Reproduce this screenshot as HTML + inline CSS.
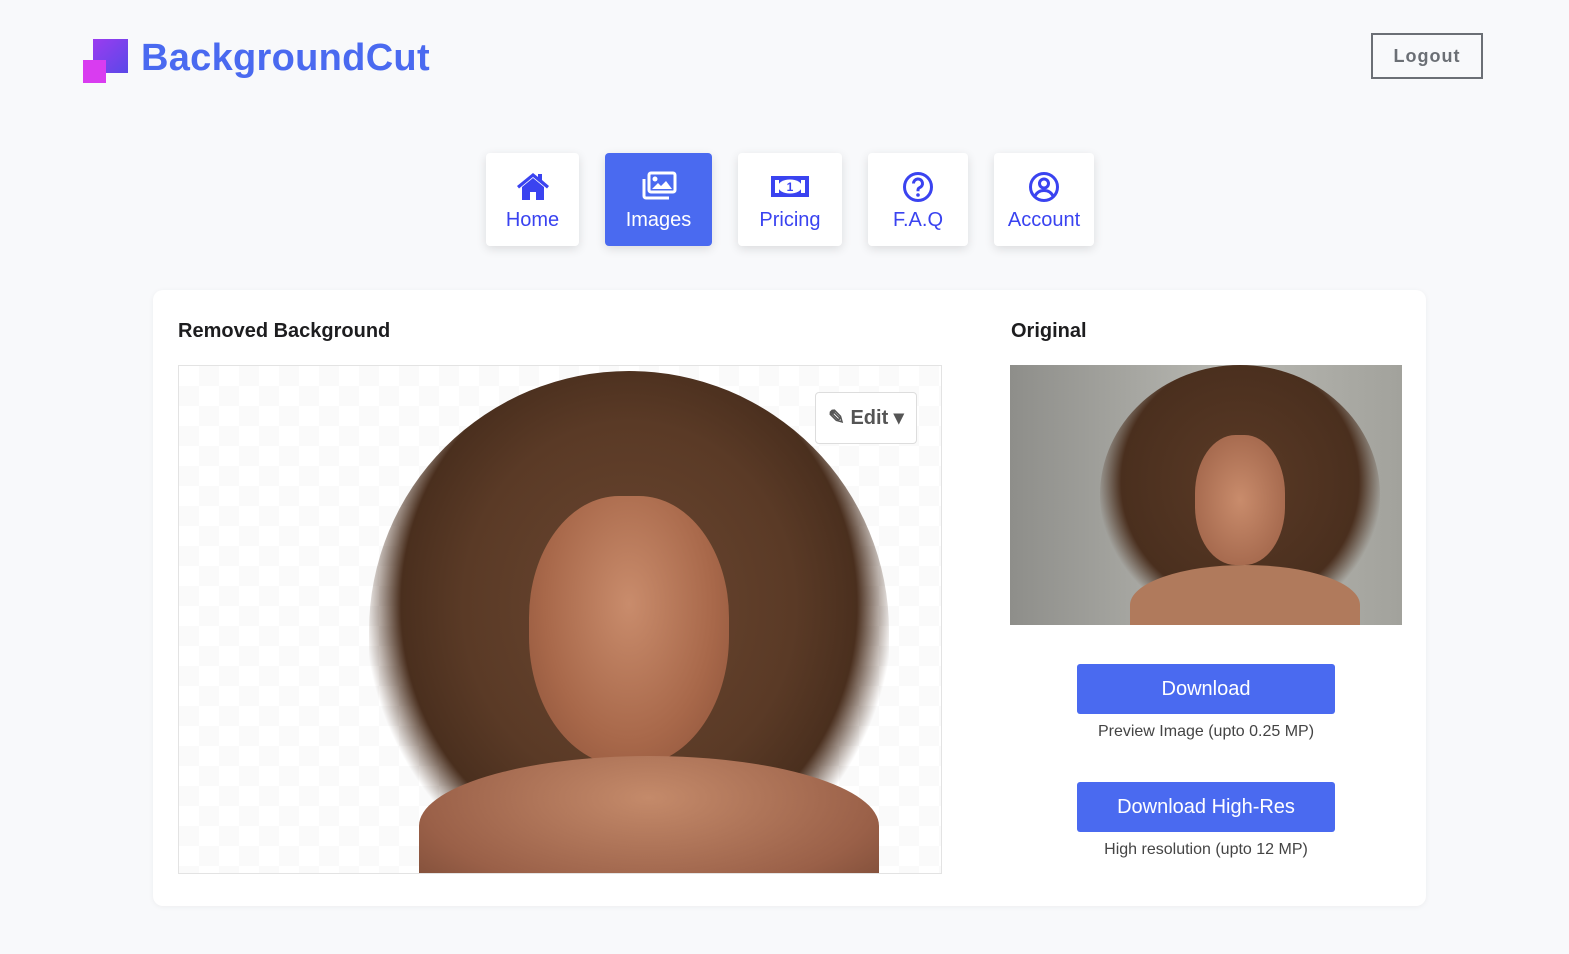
<!DOCTYPE html>
<html><head><style>
body{margin:0;background:#f8f9fb;font-family:"Liberation Sans",sans-serif;width:1569px;height:954px;position:relative;overflow:hidden}
.abs{position:absolute}
.logo{left:141px;top:37px;font-size:38px;font-weight:bold;color:#4a6af0;letter-spacing:0.3px}
.logout{left:1371px;top:33px;width:108px;height:42px;border:2px solid #6b6f75;color:#6b6f75;font-weight:bold;font-size:18px;text-align:center;line-height:42px;letter-spacing:1px}
.nav{top:153px;height:93px;background:#fff;border-radius:4px;box-shadow:0 3px 10px rgba(0,0,0,.12);color:#3a43f0;font-size:20px;text-align:center}
.nav svg{position:absolute;left:50%;top:18px;transform:translateX(-50%)}
.nav span{position:absolute;left:0;right:0;top:56px}
.card{left:153px;top:290px;width:1273px;height:616px;background:#fff;border-radius:10px;box-shadow:0 1px 6px rgba(0,0,0,.05)}
h3{margin:0;font-size:20px;font-weight:bold;color:#1d1d1f}
.btn{left:1077px;width:258px;height:50px;background:#4a6af0;color:#fff;font-size:20px;text-align:center;line-height:50px;border-radius:3px}
.cap{left:1040px;width:332px;text-align:center;font-size:16px;color:#444}
</style></head><body>
<svg class="abs" style="left:83px;top:39px" width="46" height="45"><defs><linearGradient id="g1" x1="0" y1="0" x2="1" y2="1"><stop offset="0" stop-color="#9b3cf0"/><stop offset="1" stop-color="#5a48e8"/></linearGradient></defs><rect x="10" y="0" width="35" height="34" fill="url(#g1)"/><rect x="0" y="21" width="23" height="23" fill="#d93cf0"/></svg>
<div class="abs logo">BackgroundCut</div>
<div class="abs logout">Logout</div>

<div class="abs nav" style="left:486px;width:93px"><svg width="36" height="30" viewBox="0 0 36 30"><path d="M18 2L2 15l2 2.5L18 6l14 11.5L34 15 27 9V3h-4v3z" fill="#3a43f0"/><path d="M7 16L18 7l11 9v13h-8v-8h-6v8H7z" fill="#3a43f0"/></svg><span>Home</span></div>
<div class="abs nav" style="left:605px;width:107px;background:#4a6af0;color:#fff"><svg width="36" height="30" viewBox="0 0 36 30"><rect x="8" y="2" width="26" height="19" rx="2" fill="none" stroke="#fff" stroke-width="3"/><path d="M3 8v17a2 2 0 0 0 2 2h23" fill="none" stroke="#fff" stroke-width="3"/><circle cx="14" cy="8" r="2.5" fill="#fff"/><path d="M11 18l6-6 3 3 5-5 6 8z" fill="#fff"/></svg><span>Images</span></div>
<div class="abs nav" style="left:738px;width:104px"><svg width="40" height="30" viewBox="0 0 40 30"><rect x="1" y="5" width="38" height="21" fill="#3a43f0"/><ellipse cx="20" cy="15.5" rx="12" ry="7" fill="#fff"/><rect x="5" y="9" width="4" height="13" fill="#fff"/><rect x="31" y="9" width="4" height="13" fill="#fff"/><text x="20" y="20" font-size="12" font-weight="bold" text-anchor="middle" fill="#3a43f0" font-family="Liberation Sans">1</text></svg><span>Pricing</span></div>
<div class="abs nav" style="left:868px;width:100px"><svg width="32" height="32" viewBox="0 0 32 32"><circle cx="16" cy="16" r="13.5" fill="none" stroke="#3a43f0" stroke-width="3"/><path d="M11.5 12.5a4.5 4.5 0 1 1 6 4.2c-1.2.5-1.5 1.3-1.5 2.5v1" fill="none" stroke="#3a43f0" stroke-width="3"/><circle cx="16" cy="24" r="1.8" fill="#3a43f0"/></svg><span>F.A.Q</span></div>
<div class="abs nav" style="left:994px;width:100px"><svg width="32" height="32" viewBox="0 0 32 32"><circle cx="16" cy="16" r="13.5" fill="none" stroke="#3a43f0" stroke-width="3"/><circle cx="16" cy="12.5" r="4.5" fill="none" stroke="#3a43f0" stroke-width="3"/><path d="M7 25c2-4 5-5.5 9-5.5s7 1.5 9 5.5" fill="none" stroke="#3a43f0" stroke-width="3"/></svg><span>Account</span></div>

<div class="abs card"></div>
<h3 class="abs" style="left:178px;top:320px">Removed Background</h3>
<h3 class="abs" style="left:1011px;top:320px">Original</h3>

<div class="abs" style="left:178px;top:365px;width:762px;height:507px;border:1px solid #e3e3e3;overflow:hidden;background-color:#fff;background-image:linear-gradient(45deg,#fafafa 25%,transparent 25%,transparent 75%,#fafafa 75%),linear-gradient(45deg,#fafafa 25%,transparent 25%,transparent 75%,#fafafa 75%);background-size:40px 40px;background-position:0 0,20px 20px">
<div class="abs" style="left:190px;top:5px;width:520px;height:520px;border-radius:50% 50% 40% 40%;background:radial-gradient(ellipse at 50% 45%,#6a4630 0%,#5a3a26 45%,#4a2f1e 62%,rgba(74,47,30,0) 72%)"></div>
<div class="abs" style="left:350px;top:130px;width:200px;height:270px;border-radius:45% 45% 48% 48%;background:radial-gradient(ellipse at 50% 40%,#c98c6c,#a8684a 60%,#8a5038)"></div>
<div class="abs" style="left:240px;top:390px;width:460px;height:140px;border-radius:50% 50% 0 0;background:radial-gradient(ellipse at 50% 30%,#c48a6a,#9a6048 70%,#7a4a36)"></div>
<div class="abs" style="left:636px;top:26px;width:100px;height:50px;background:#fff;border:1px solid #ddd;border-radius:4px;color:#555;font-weight:bold;font-size:20px;line-height:50px;text-align:center">✎ Edit ▾</div>
</div>

<div class="abs" style="left:1010px;top:365px;width:392px;height:260px;overflow:hidden;background:linear-gradient(90deg,#8e8e8a,#b8b8b2 55%,#a2a29c)">
<div class="abs" style="left:90px;top:0;width:280px;height:260px;border-radius:50%;background:radial-gradient(ellipse at 50% 45%,#5a3a26,#4a2f1e 60%,rgba(74,47,30,0) 72%)"></div>
<div class="abs" style="left:185px;top:70px;width:90px;height:130px;border-radius:45%;background:radial-gradient(ellipse,#c98c6c,#9a5e44)"></div>
<div class="abs" style="left:120px;top:200px;width:230px;height:80px;border-radius:50% 50% 0 0;background:#b07a5c"></div>
</div>

<div class="abs btn" style="top:664px">Download</div>
<div class="abs cap" style="top:723px">Preview Image (upto 0.25 MP)</div>
<div class="abs btn" style="top:782px">Download High-Res</div>
<div class="abs cap" style="top:841px">High resolution (upto 12 MP)</div>
</body></html>
